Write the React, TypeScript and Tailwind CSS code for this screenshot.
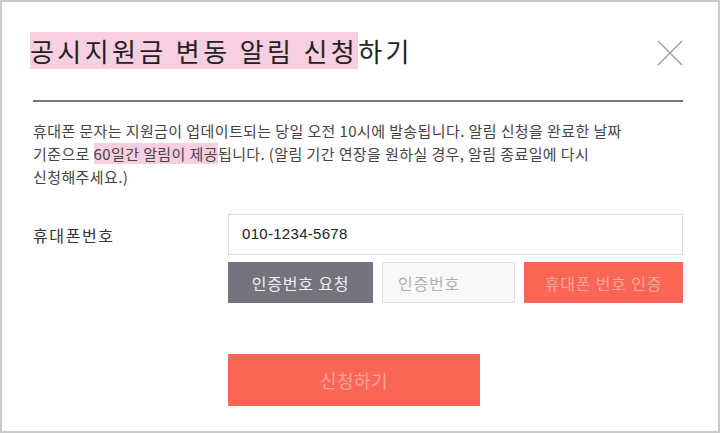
import React from 'react';

const font = { fontFamily: '"Noto Sans CJK KR", "Noto Sans", sans-serif' };

export default function App() {
  return (
    <div
      className="w-[720px] h-[433px] border-2 border-[#c9c9c9] bg-white text-[#333] overflow-hidden"
      style={font}
    >
      {/* header */}
      <div className="flex items-start justify-between pl-[28px] pr-[35px] pt-[30px]">
        <h1 className="text-[26px] leading-[38px] tracking-[3.4px] text-[#222] font-normal">
          <span className="bg-[#f8cfe0]">공시지원금 변동 알림 신청</span>하기
        </h1>
        <button className="mt-[8px] w-[26px] h-[26px] text-[#a0a0a0]">
          <svg viewBox="0 0 26 26" className="w-[26px] h-[26px]" fill="none" stroke="currentColor" strokeWidth="1.5">
            <path d="M1 1 L25 25 M25 1 L1 25" />
          </svg>
        </button>
      </div>

      <div className="ml-[31px] mr-[35px]">
        <div className="mt-[30px] h-[2px] bg-[#777]" />

        <p className="mt-[17px] text-[15px] leading-[23px] tracking-[0.4px] text-[#444]">
          휴대폰 문자는 지원금이 업데이트되는 당일 오전 10시에 발송됩니다. 알림 신청을 완료한 날짜
          <br />
          기준으로 <span className="bg-[#f8cfe0]">60일간 알림이 제공</span>됩니다. (알림 기간 연장을 원하실 경우, 알림 종료일에 다시
          <br />
          신청해주세요.)
        </p>

        <div className="mt-[26px] grid grid-cols-[195px_1fr] gap-y-[7px]">
          <label className="self-center text-[16px] tracking-[1.6px] text-[#333]">휴대폰번호</label>
          <div className="h-[41px] border border-[#dcdcdc] flex items-center px-[13px]">
            <span className="text-[15px] tracking-[0.3px] text-[#222]" style={{ fontFamily: '"Liberation Sans", Arial, sans-serif' }}>
              010-1234-5678
            </span>
          </div>

          <div />
          <div className="flex gap-[9px] h-[41px] text-[16px] tracking-[0.8px]">
            <button className="w-[145px] bg-[#75737d] text-[#f0f0f0]">인증번호 요청</button>
            <div className="w-[133px] bg-[#f8f8f8] border border-[#e0e0e0] flex items-center px-[15px] text-[#b0b0b0]">
              인증번호
            </div>
            <button className="flex-1 bg-[#f96655] text-[#fba59b]">휴대폰 번호 인증</button>
          </div>
        </div>

        <div className="mt-[51px] grid grid-cols-[195px_1fr]">
          <div />
          <button className="w-[252px] h-[52px] bg-[#f96655] text-[#fba59b] text-[18px] tracking-[0.5px]">신청하기</button>
        </div>
      </div>
    </div>
  );
}
